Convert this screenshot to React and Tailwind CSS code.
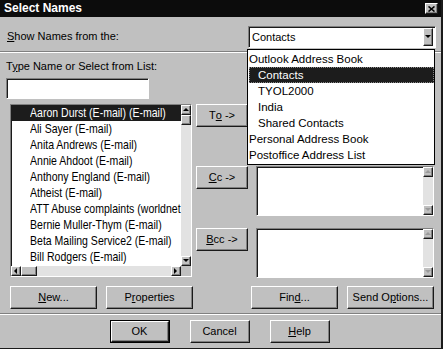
import React from "react";

const raised =
  "bg-[#c0c0c0] border border-t-white border-l-white border-r-[#1a1a1a] border-b-[#1a1a1a] shadow-[inset_-1px_-1px_#808080]";
const sunken =
  "border border-t-[#808080] border-l-[#808080] border-r-white border-b-white shadow-[inset_1px_1px_#1a1a1a]";

const Arrow = ({ dir, color = "#000" }) => {
  const pts = {
    up: "1,5 4,2 7,5",
    down: "1,2 4,5 7,2",
    left: "5,1 2,4 5,7",
    right: "2,1 5,4 2,7",
  }[dir];
  return (
    <svg width="8" height="8" viewBox="0 0 8 8">
      <polygon points={pts} fill={color} />
    </svg>
  );
};

const ArrowBtn = ({ dir, color }) => (
  <div className={`w-[10px] h-[10px] shrink-0 flex items-center justify-center ${raised}`}>
    <Arrow dir={dir} color={color} />
  </div>
);

const VScroll = ({ thumb, color }) => (
  <div className="w-[10px] h-full flex flex-col bg-[#e2e2e2]">
    <ArrowBtn dir="up" color={color} />
    {thumb && <div className={`w-[10px] h-[10px] ${raised}`} />}
    <div className="flex-1" />
    <ArrowBtn dir="down" color={color} />
  </div>
);

const Btn = ({ children, className = "" }) => (
  <div className={`h-[23px] flex items-center justify-center ${raised} ${className}`}>{children}</div>
);

const names = [
  "Aaron Durst (E-mail) (E-mail)",
  "Ali Sayer (E-mail)",
  "Anita Andrews (E-mail)",
  "Annie Ahdoot (E-mail)",
  "Anthony England (E-mail)",
  "Atheist (E-mail)",
  "ATT Abuse complaints (worldnet.att.net)",
  "Bernie Muller-Thym (E-mail)",
  "Beta Mailing Service2 (E-mail)",
  "Bill Rodgers (E-mail)",
];

const books = [
  { label: "Outlook Address Book", indent: false },
  { label: "Contacts", indent: true, selected: true },
  { label: "TYOL2000", indent: true },
  { label: "India", indent: true },
  { label: "Shared Contacts", indent: true },
  { label: "Personal Address Book", indent: false },
  { label: "Postoffice Address List", indent: false },
];

export default function App() {
  return (
    <div className="relative w-[443px] h-[349px] overflow-hidden bg-[#c0c0c0] border-r-2 border-b border-[#1a1a1a] font-['Liberation_Sans',Arial,sans-serif] text-[11px] leading-[13px] text-black">
      {/* title bar */}
      <div className="h-[17px] bg-[#0c0c0c] flex items-center justify-between pl-[4px] pr-[3px]">
        <span className="text-white font-bold text-[12px]">Select Names</span>
        <div className={`w-[13px] h-[11px] flex items-center justify-center ${raised}`}>
          <svg width="7" height="6" viewBox="0 0 7 6">
            <path d="M0.5 0.5 L6.5 5.5 M6.5 0.5 L0.5 5.5" stroke="#000" strokeWidth="1.6" />
          </svg>
        </div>
      </div>

      {/* show names row */}
      <div className="mt-[9px] h-[22px] flex items-center">
        <span className="ml-[7px] -mt-[2px]">
          <u>S</u>how Names from the:
        </span>
        <div className={`ml-auto mr-[5px] w-[188px] h-[22px] bg-white flex items-center justify-between pl-[3px] pr-[2px] ${sunken}`}>
          <span>Contacts</span>
          <div className={`w-[10px] h-[18px] flex items-center justify-center ${raised}`}>
            <Arrow dir="down" />
          </div>
        </div>
      </div>

      <div className="mt-[3px] border-t border-t-[#808080] border-b border-b-white" />

      <div className="mt-[7px] ml-[6px]">
        T<u>y</u>pe Name or Select from List:
      </div>
      <div className={`mt-[5px] ml-[6px] w-[143px] h-[21px] bg-white ${sunken}`} />

      {/* main area */}
      <div className="mt-[5px] flex">
        <div className={`ml-[10px] w-[182px] h-[173px] bg-white flex flex-col ${sunken}`}>
          <div className="flex flex-1 min-h-0">
            <div className="flex-1 min-w-0 overflow-hidden text-[13px] leading-[16px]">
              {names.map((n, i) => (
                <div key={n} className={`h-[16px] pl-[19px] ${i === 0 ? "bg-[#1c1c1c] text-white" : ""}`}>
                  <span className="inline-block whitespace-nowrap origin-left scale-x-[0.81]">{n}</span>
                </div>
              ))}
            </div>
            <VScroll thumb />
          </div>
          <div className="h-[10px] flex bg-[#e2e2e2]">
            <ArrowBtn dir="left" />
            <div className={`w-[16px] h-[10px] ${raised}`} />
            <div className="flex-1" />
            <ArrowBtn dir="right" />
            <div className="w-[10px] h-[10px] bg-[#c0c0c0]" />
          </div>
        </div>

        <div className="ml-[4px] w-[52px] flex flex-col gap-[39px]">
          <Btn>
            T<u>o</u>&nbsp;-&gt;
          </Btn>
          <Btn>
            <u>C</u>c&nbsp;-&gt;
          </Btn>
          <Btn>
            <u>B</u>cc&nbsp;-&gt;
          </Btn>
        </div>

        <div className="ml-[8px] w-[178px] flex flex-col gap-[12px]">
          {[0, 1, 2].map((k) => (
            <div key={k} className={`h-[50px] bg-white flex justify-end ${sunken}`}>
              <VScroll color="#9a9a9a" />
            </div>
          ))}
        </div>
      </div>

      {/* action buttons */}
      <div className="mt-[8px] flex">
        <Btn className="ml-[10px] w-[87px]">
          <u>N</u>ew...
        </Btn>
        <Btn className="ml-[9px] w-[87px]">
          P<u>r</u>operties
        </Btn>
        <Btn className="ml-[58px] w-[87px]">
          Fin<u>d</u>...
        </Btn>
        <Btn className="ml-[9px] w-[87px]">
          Send O<u>p</u>tions...
        </Btn>
      </div>

      <div className="mt-[4px] border-t border-t-[#808080] border-b border-b-white" />

      <div className="mt-[5px] flex justify-center gap-[20px] pr-[2px]">
        <div className="w-[60px] h-[23px] border border-black flex">
          <div className={`flex-1 flex items-center justify-center ${raised}`}>OK</div>
        </div>
        <Btn className="w-[60px]">Cancel</Btn>
        <Btn className="w-[60px]">
          <u>H</u>elp
        </Btn>
      </div>

      {/* open dropdown list */}
      <div className="absolute left-[247px] top-[49px] w-[188px] bg-white border border-black py-[1px]">
        {books.map((b) => (
          <div
            key={b.label}
            className={`h-[16px] leading-[16px] text-[11.5px] whitespace-nowrap ${b.indent ? "ml-[1px] pl-[9px]" : "pl-[1px]"} ${
              b.selected ? "bg-[#1c1c1c] text-white outline-1 outline-dotted outline-[#888] -outline-offset-1" : ""
            }`}
          >
            {b.label}
          </div>
        ))}
      </div>
    </div>
  );
}
